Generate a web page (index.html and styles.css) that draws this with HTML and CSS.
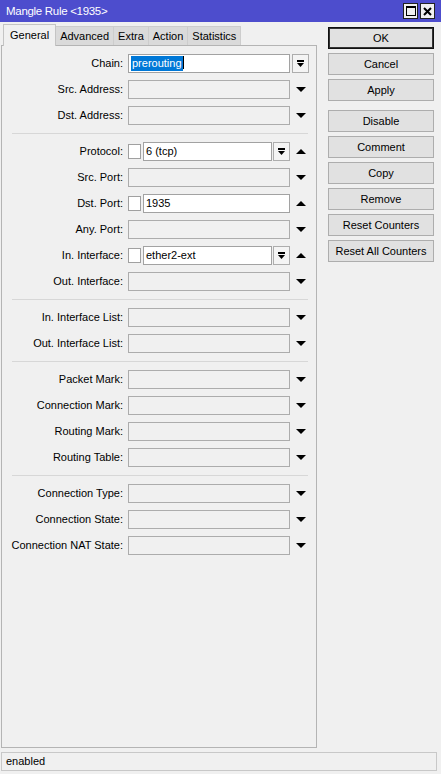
FILE: index.html
```html
<!DOCTYPE html>
<html>
<head lang="en">
    <meta charset="utf-8">
    <title>Mangle Rule &lt;1935&gt;</title>
    <link rel="stylesheet" href="styles.css">
</head>

<body>

<div class="window">
    <div class="titlebar">
        <span class="title">Mangle Rule &lt;1935&gt;</span>
        <div class="winBtns">
            <span class="winBtn">
                <svg width="10" height="10" viewBox="0 0 10 10"><rect x="0.5" y="0.5" width="9" height="9" fill="none" stroke="#000"/><rect x="0" y="0" width="10" height="2" fill="#000"/></svg>
            </span>
            <span class="winBtn">
                <svg width="9" height="9" viewBox="0 0 9 9"><path d="M1 1 L8 8 M8 1 L1 8" stroke="#000" stroke-width="2"/></svg>
            </span>
        </div>
    </div>

    <div class="main">
        <div class="editor">
            <div class="tabs">
                <span class="tab active">General</span>
                <span class="tab">Advanced</span>
                <span class="tab">Extra</span>
                <span class="tab">Action</span>
                <span class="tab">Statistics</span>
            </div>

            <div class="panel">
                <div class="row">
                    <label class="lbl">Chain:</label>
                    <div class="field"><span class="input on"><span class="sel">prerouting</span><span class="caret"></span></span></div>
                    <div class="arr"><span class="ddBtn"><svg width="7" height="7" viewBox="0 0 7 7"><rect x="0" y="0" width="7" height="2"/><polygon points="0,3 7,3 3.5,7"/></svg></span></div>
                </div>
                <div class="row">
                    <label class="lbl">Src. Address:</label>
                    <div class="field"><span class="input"></span></div>
                    <div class="arr"><span class="down"></span></div>
                </div>
                <div class="row">
                    <label class="lbl">Dst. Address:</label>
                    <div class="field"><span class="input"></span></div>
                    <div class="arr"><span class="down"></span></div>
                </div>

                <div class="sep"></div>

                <div class="row">
                    <label class="lbl">Protocol:</label>
                    <div class="field">
                        <span class="chk"></span>
                        <span class="input on">6 (tcp)</span>
                        <span class="ddBtn inner"><svg width="7" height="7" viewBox="0 0 7 7"><rect x="0" y="0" width="7" height="2"/><polygon points="0,3 7,3 3.5,7"/></svg></span>
                    </div>
                    <div class="arr"><span class="up"></span></div>
                </div>
                <div class="row">
                    <label class="lbl">Src. Port:</label>
                    <div class="field"><span class="input"></span></div>
                    <div class="arr"><span class="down"></span></div>
                </div>
                <div class="row">
                    <label class="lbl">Dst. Port:</label>
                    <div class="field">
                        <span class="chk"></span>
                        <span class="input on">1935</span>
                    </div>
                    <div class="arr"><span class="up"></span></div>
                </div>
                <div class="row">
                    <label class="lbl">Any. Port:</label>
                    <div class="field"><span class="input"></span></div>
                    <div class="arr"><span class="down"></span></div>
                </div>
                <div class="row">
                    <label class="lbl">In. Interface:</label>
                    <div class="field">
                        <span class="chk"></span>
                        <span class="input on">ether2-ext</span>
                        <span class="ddBtn inner"><svg width="7" height="7" viewBox="0 0 7 7"><rect x="0" y="0" width="7" height="2"/><polygon points="0,3 7,3 3.5,7"/></svg></span>
                    </div>
                    <div class="arr"><span class="up"></span></div>
                </div>
                <div class="row">
                    <label class="lbl">Out. Interface:</label>
                    <div class="field"><span class="input"></span></div>
                    <div class="arr"><span class="down"></span></div>
                </div>

                <div class="sep"></div>

                <div class="row">
                    <label class="lbl">In. Interface List:</label>
                    <div class="field"><span class="input"></span></div>
                    <div class="arr"><span class="down"></span></div>
                </div>
                <div class="row">
                    <label class="lbl">Out. Interface List:</label>
                    <div class="field"><span class="input"></span></div>
                    <div class="arr"><span class="down"></span></div>
                </div>

                <div class="sep"></div>

                <div class="row">
                    <label class="lbl">Packet Mark:</label>
                    <div class="field"><span class="input"></span></div>
                    <div class="arr"><span class="down"></span></div>
                </div>
                <div class="row">
                    <label class="lbl">Connection Mark:</label>
                    <div class="field"><span class="input"></span></div>
                    <div class="arr"><span class="down"></span></div>
                </div>
                <div class="row">
                    <label class="lbl">Routing Mark:</label>
                    <div class="field"><span class="input"></span></div>
                    <div class="arr"><span class="down"></span></div>
                </div>
                <div class="row">
                    <label class="lbl">Routing Table:</label>
                    <div class="field"><span class="input"></span></div>
                    <div class="arr"><span class="down"></span></div>
                </div>

                <div class="sep"></div>

                <div class="row">
                    <label class="lbl">Connection Type:</label>
                    <div class="field"><span class="input"></span></div>
                    <div class="arr"><span class="down"></span></div>
                </div>
                <div class="row">
                    <label class="lbl">Connection State:</label>
                    <div class="field"><span class="input"></span></div>
                    <div class="arr"><span class="down"></span></div>
                </div>
                <div class="row">
                    <label class="lbl">Connection NAT State:</label>
                    <div class="field"><span class="input"></span></div>
                    <div class="arr"><span class="down"></span></div>
                </div>
            </div>
        </div>

        <div class="actions">
            <span class="btn default">OK</span>
            <span class="btn">Cancel</span>
            <span class="btn">Apply</span>
            <span class="btn group">Disable</span>
            <span class="btn">Comment</span>
            <span class="btn">Copy</span>
            <span class="btn">Remove</span>
            <span class="btn">Reset Counters</span>
            <span class="btn">Reset All Counters</span>
        </div>
    </div>

    <div class="status">enabled</div>
</div>

</body>
</html>
```

FILE: styles.css
```css
html, body {
    margin: 0;
    padding: 0;
}

body {
    width: 441px;
    height: 774px;
    background: #f0f0f0;
    font-family: "Liberation Sans", Arial, sans-serif;
    font-size: 11px;
    color: #000;
    overflow: hidden;
}

.window {
    display: flex;
    flex-direction: column;
    height: 774px;
}

/* title bar */
.titlebar {
    display: flex;
    align-items: center;
    justify-content: space-between;
    height: 22px;
    padding: 0 6px;
    background: #4d4dcd;
    flex: none;
}

.title {
    color: #fff;
    font-size: 11.5px;
    letter-spacing: -0.3px;
}

.winBtns {
    display: flex;
    gap: 2px;
}

.winBtn {
    display: flex;
    align-items: center;
    justify-content: center;
    width: 13px;
    height: 14px;
    background: #f0f0f0;
    border: 1px solid #222;
}

/* main area */
.main {
    display: flex;
    flex: 1;
    min-height: 0;
    padding-left: 1px;
}

.editor {
    display: flex;
    flex-direction: column;
    width: 316px;
}

.tabs {
    display: flex;
    align-items: flex-end;
    height: 23px;
    padding-left: 2px;
    flex: none;
}

.tab {
    height: 19px;
    line-height: 19px;
    padding: 0 4px;
    background: #dadada;
    border: 1px solid #cdcdcd;
    border-bottom: none;
    margin-right: -1px;
    box-sizing: border-box;
}

.tab.active {
    height: 22px;
    line-height: 21px;
    background: #f0f0f0;
    border-color: #c4c4c4;
    margin-bottom: -1px;
    position: relative;
    z-index: 1;
    padding: 0 6px;
}

.panel {
    flex: 1;
    border: 1px solid #b4b4b4;
    padding-top: 4px;
    margin-bottom: 1px;
}

/* form rows */
.row {
    display: flex;
    align-items: center;
    height: 26px;
}

.lbl {
    width: 121px;
    margin-right: 5px;
    text-align: right;
    white-space: nowrap;
}

.field {
    display: flex;
    align-items: center;
    width: 162px;
}

.input {
    flex: 1;
    height: 19px;
    line-height: 17px;
    padding-left: 2px;
    border: 1px solid #acacac;
    box-sizing: border-box;
    white-space: nowrap;
    overflow: hidden;
}

.input.on {
    background: #fff;
    border-color: #a2a2a2;
}

.sel {
    background: #0078d7;
    color: #fff;
    padding: 1px 1px 2px 1px;
}

.caret {
    display: inline-block;
    width: 1px;
    height: 13px;
    background: #000;
    vertical-align: -2px;
}

.chk {
    width: 13px;
    height: 15px;
    background: #fff;
    border: 1px solid #a0a0a0;
    box-sizing: border-box;
    margin-right: 2px;
    flex: none;
}

.arr {
    display: flex;
    align-items: center;
    justify-content: center;
    width: 19px;
    padding-left: 2px;
    box-sizing: border-box;
}

.ddBtn {
    display: flex;
    align-items: center;
    justify-content: center;
    width: 17px;
    height: 19px;
    background: #f4f4f4;
    border: 1px solid #adadad;
    box-sizing: border-box;
    flex: none;
}

.arr .ddBtn {
    margin-right: 1px;
}

.ddBtn.inner {
    margin-left: 1px;
}

.down {
    width: 0;
    height: 0;
    border-left: 5px solid transparent;
    border-right: 5px solid transparent;
    border-top: 5px solid #000;
}

.up {
    width: 0;
    height: 0;
    border-left: 5px solid transparent;
    border-right: 5px solid transparent;
    border-bottom: 5px solid #000;
}

.sep {
    margin: 5px 8px 4px 10px;
    height: 1px;
    background: #d7d7d7;
}

/* right side buttons */
.actions {
    display: flex;
    flex-direction: column;
    gap: 4px;
    width: 106px;
    margin-left: 11px;
    padding-top: 5px;
}

.btn {
    height: 22px;
    line-height: 20px;
    text-align: center;
    background: #e1e1e1;
    border: 1px solid #adadad;
    box-sizing: border-box;
}

.btn.default {
    border-color: #111;
    box-shadow: inset 0 0 0 1px #333;
}

.btn.group {
    margin-top: 5px;
}

/* status bar */
.status {
    flex: none;
    height: 19px;
    line-height: 17px;
    margin: 3px 4px 3px 1px;
    padding-left: 4px;
    border: 1px solid #c8c8c8;
    box-sizing: border-box;
}
```
